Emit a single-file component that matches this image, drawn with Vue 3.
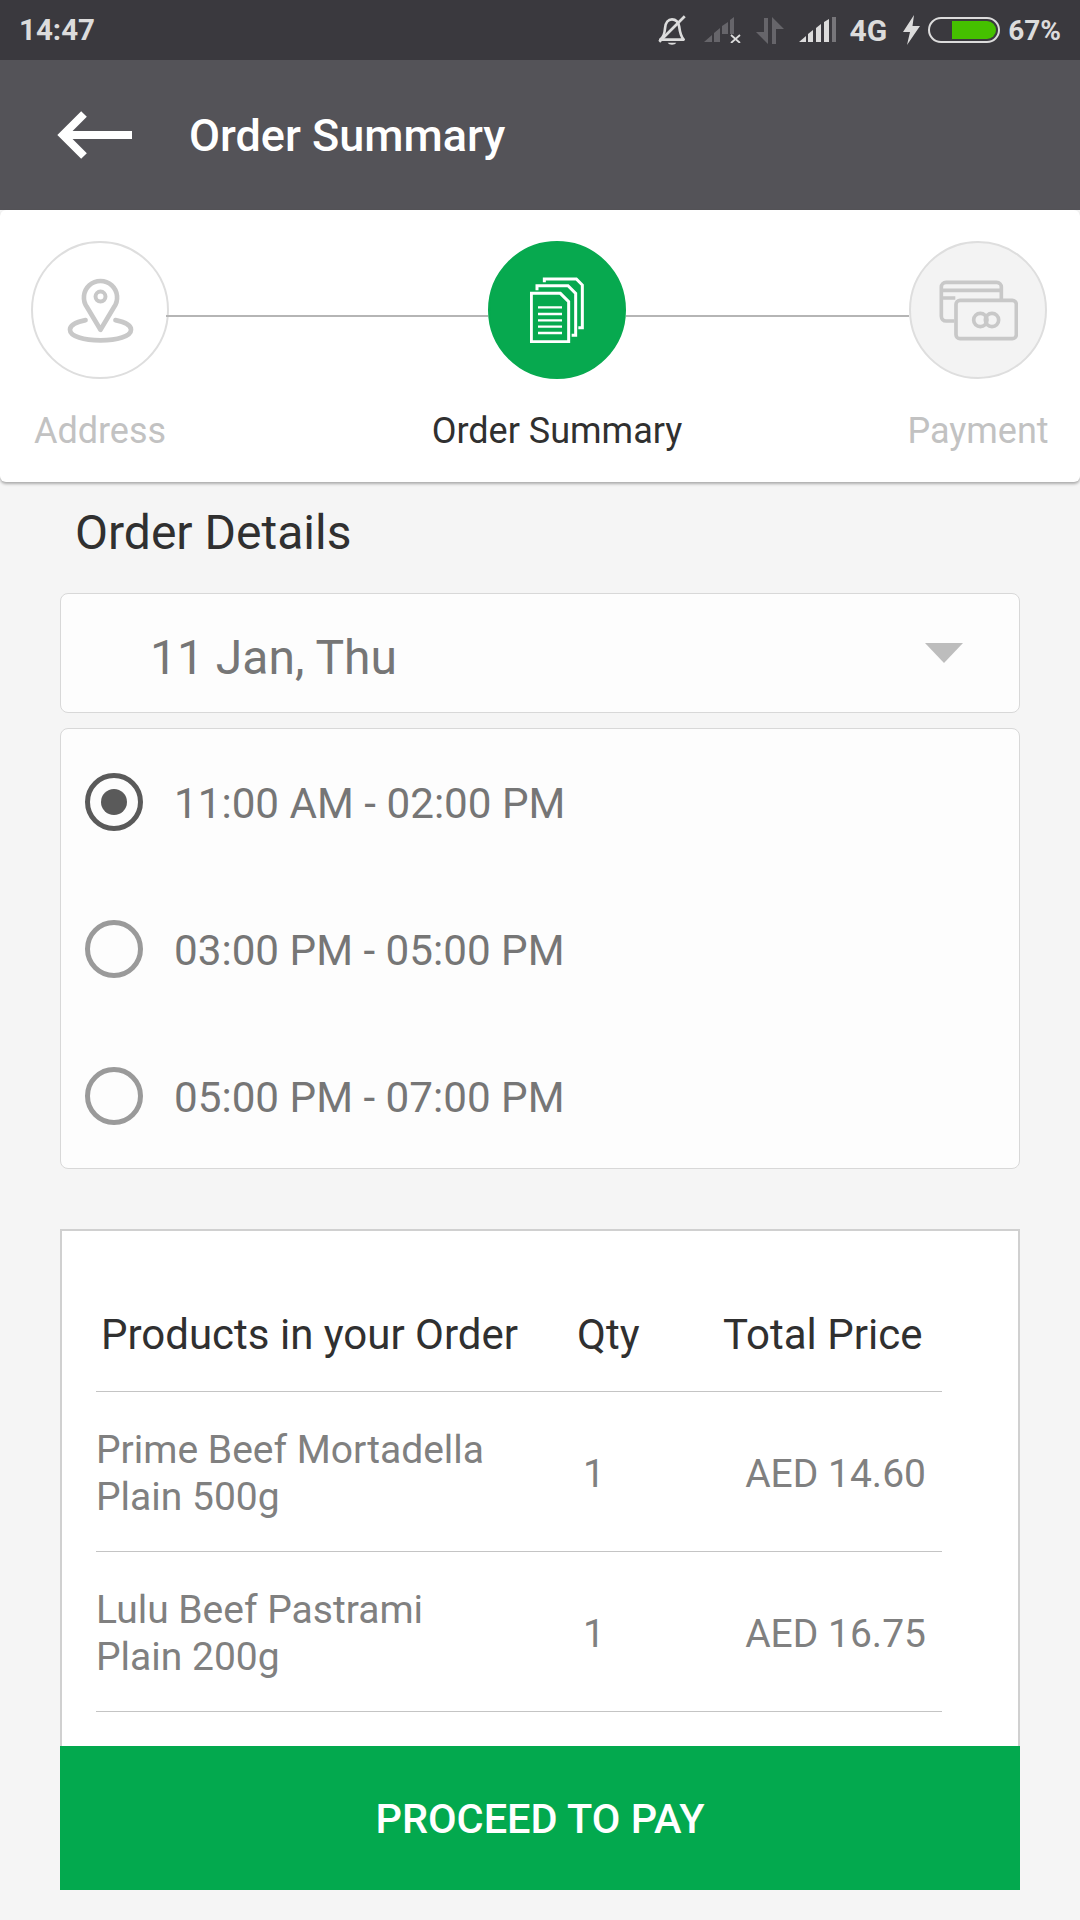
<template>
  <div class="screen">
    <div class="status-bar">
      <span class="clock">14:47</span>
      <div class="status-icons">
        <svg class="ic-bell" viewBox="0 0 32 32" width="34" height="34">
          <path d="M5 25c3-3 4-5 4.500-11 .4-5 3-8 6.500-8s6 2.500 6.800 7c.6 5 1.700 9 4.200 12z" fill="none" stroke="#dcdcdc" stroke-width="2.500" stroke-linejoin="round"/>
          <path d="M12 28c1 2.500 7 2.500 8 0z" fill="#dcdcdc"/>
          <path d="M4 27L28 3" stroke="#dcdcdc" stroke-width="2.500"/>
        </svg>
        <svg class="ic-sig1" viewBox="0 0 38 26" width="38" height="26">
          <path d="M0 25L8 18V25zM10 16L16 11V25H10zM18 9L24 5V17H18zM26 3L30 0V17H26z" fill="#66656a"/>
          <path d="M27 18L36 26M36 18L27 26" stroke="#dcdcdc" stroke-width="1.800"/>
        </svg>
        <svg class="ic-data" viewBox="0 0 28 27" width="28" height="27">
          <path d="M8 1H12V27L0 15H8zM16 0L28 12H20V27H16z" fill="#66656a"/>
        </svg>
        <svg class="ic-sig2" viewBox="0 0 38 26" width="38" height="26">
          <path d="M0 25L7 19V25zM9 17L14 13V25H9zM17 11L22 7V25H17zM25 5L30 2V25H25z" fill="#dcdcdc"/>
          <rect x="33" y="0" width="4" height="25" fill="#77767a"/>
        </svg>
        <span class="net">4G</span>
        <svg class="ic-bolt" viewBox="0 0 18 30" width="18" height="30">
          <path d="M11 0L0 17H7L4 30L17 11H9.500z" fill="#dcdcdc"/>
        </svg>
        <div class="battery"><div class="battery-fill"></div></div>
        <span class="pct">67%</span>
      </div>
    </div>

    <div class="app-bar">
      <svg class="back" viewBox="0 0 80 52" width="80" height="52">
        <path d="M77 26H8M29 5L8 26L29 47" fill="none" stroke="#fff" stroke-width="8"/>
      </svg>
      <span class="app-title">Order Summary</span>
    </div>

    <div class="stepper">
      <div class="step">
        <div class="circle">
          <svg viewBox="190 190 220 220" width="73" height="73" fill="none" stroke="#c8c8c8" stroke-width="14">
            <path d="M300 358L260 291A50 50 0 1 1 340 291Z" stroke-linejoin="round"/>
            <circle cx="300" cy="258" r="15" stroke-width="12"/>
            <path d="M255 329C225 335 208 345 208 358C208 378 250 390 300 390C350 390 392 378 392 358C392 345 375 335 345 329" stroke-linecap="round"/>
          </svg>
        </div>
        <span class="step-label">Address</span>
      </div>
      <div class="connector first"></div>
      <div class="step">
        <div class="circle active">
          <svg viewBox="270 200 162 198" width="54" height="66" fill="none" stroke="#fff" stroke-width="9">
            <path d="M313 216V206H409L427 224V352H415"/>
            <path d="M291 240V226H384L407 249V375H395"/>
            <path d="M274 249H361L386 274V394H274Z" fill="#07a94f"/>
            <path d="M294 291H366M294 311H366M294 330H366M294 349H366M294 368H366" stroke-width="7"/>
          </svg>
        </div>
        <span class="step-label current">Order Summary</span>
      </div>
      <div class="connector"></div>
      <div class="step">
        <div class="circle muted">
          <svg viewBox="173 180 240 240" width="80" height="80" fill="none" stroke="#c8c8c8" stroke-width="11">
            <path d="M222 333H197A14 14 0 0 1 183 319V231A14 14 0 0 1 197 217H349A14 14 0 0 1 363 231V268"/>
            <path d="M183 241H363M183 264H225"/>
            <rect x="227" y="271" width="181" height="115" rx="12"/>
            <circle cx="300" cy="330" r="20"/>
            <circle cx="335" cy="330" r="20"/>
          </svg>
        </div>
        <span class="step-label">Payment</span>
      </div>
    </div>

    <h2 class="section-title">Order Details</h2>

    <div class="date-box">
      <span>11 Jan, Thu</span>
      <span class="caret"></span>
    </div>

    <div class="slot-box">
      <div class="slot" v-for="(s, i) in slots" :key="s">
        <span class="radio" :class="{ on: i === selected }"></span>
        <span class="slot-text">{{ s }}</span>
      </div>
    </div>

    <div class="products">
      <div class="row head">
        <span>Products in your Order</span>
        <span class="qty-head">Qty</span>
        <span class="price-head">Total Price</span>
      </div>
      <div class="row item" v-for="p in products" :key="p.name">
        <span class="name">{{ p.name }}<br>{{ p.size }}</span>
        <span class="qty">{{ p.qty }}</span>
        <span class="price">{{ p.price }}</span>
      </div>
    </div>

    <div class="pay-btn">PROCEED TO PAY</div>
  </div>
</template>

<script setup>
import { ref } from "vue";

const selected = ref(0);

const slots = ["11:00 AM - 02:00 PM", "03:00 PM - 05:00 PM", "05:00 PM - 07:00 PM"];

const products = [
  { name: "Prime Beef Mortadella", size: "Plain 500g", qty: 1, price: "AED 14.60" },
  { name: "Lulu Beef Pastrami", size: "Plain 200g", qty: 1, price: "AED 16.75" }
];
</script>

<style>
html, body {
  margin: 0;
  background: #f5f5f5;
}
</style>

<style scoped>
.screen {
  position: relative;
  width: 1080px;
  height: 1920px;
  overflow: hidden;
  background: #f5f5f5;
  font-family: Roboto, "Liberation Sans", sans-serif;
}

.status-bar {
  height: 60px;
  background: #3a393e;
  display: flex;
  align-items: center;
  justify-content: space-between;
  padding: 0 19px;
  box-sizing: border-box;
  color: #dcdcdc;
  font-size: 28px;
  font-weight: 700;
}

.clock { font-size: 29.500px; }

.status-icons {
  display: flex;
  align-items: center;
}

.ic-sig1 { margin-left: 15px; }
.ic-data { margin-left: 14px; }
.ic-sig2 { margin-left: 15px; }
.net { margin-left: 13px; font-size: 30px; }
.ic-bolt { margin-left: 16px; }

.battery {
  width: 72px;
  height: 26px;
  margin-left: 7px;
  box-sizing: border-box;
  border: 2px solid #dcdcdc;
  border-radius: 13px;
  padding: 2px;
  display: flex;
  justify-content: flex-end;
}

.battery-fill {
  width: 44px;
  background: #45c000;
  border-radius: 0 9px 9px 0;
}

.pct { margin-left: 8px; }

.app-bar {
  height: 150px;
  background: #545358;
  display: flex;
  align-items: center;
  padding-left: 55px;
}

.back { margin-right: 54px; }

.app-title {
  color: #fff;
  font-size: 45px;
  font-weight: 500;
}

.stepper {
  height: 272px;
  box-sizing: border-box;
  padding: 31px 33px 0 31px;
  display: flex;
  background: #fff;
  border-radius: 6px;
  box-shadow: 0 2px 3px rgba(0, 0, 0, 0.3);
}

.step {
  width: 138px;
  display: flex;
  flex-direction: column;
  align-items: center;
}

.circle {
  width: 138px;
  height: 138px;
  flex-shrink: 0;
  box-sizing: border-box;
  border: 2px solid #dedede;
  border-radius: 50%;
  background: #fff;
  display: flex;
  align-items: center;
  justify-content: center;
}

.circle.active {
  background: #07a94f;
  border-color: #07a94f;
}

.circle.muted {
  background: #f3f3f3;
}

.connector {
  flex: 1;
  height: 2px;
  margin-top: 74px;
  background: #b5b5b5;
}

.connector.first {
  flex: 0 0 322px;
  margin-left: -3px;
}

.step-label {
  margin-top: 32px;
  font-size: 36px;
  line-height: 40px;
  white-space: nowrap;
  color: #c2c2c2;
}

.step-label.current {
  color: #303030;
}

.section-title {
  margin: 25px 0 0 75px;
  font-size: 48px;
  line-height: 52px;
  font-weight: 400;
  color: #303030;
}

.date-box {
  margin: 34px 60px 0;
  height: 120px;
  box-sizing: border-box;
  padding: 8px 56px 0 89px;
  display: flex;
  align-items: center;
  justify-content: space-between;
  background: #fdfdfd;
  border: 1.5px solid #d8d8d8;
  border-radius: 8px;
  font-size: 48px;
  color: #767676;
}

.caret {
  width: 0;
  height: 0;
  margin-top: -8px;
  border-left: 19px solid transparent;
  border-right: 19px solid transparent;
  border-top: 20px solid #bdbdbd;
}

.slot-box {
  margin: 15px 60px 0;
  height: 441px;
  box-sizing: border-box;
  padding: 0 0 0 24px;
  background: #fdfdfd;
  border: 1.5px solid #d8d8d8;
  border-radius: 8px;
  font-size: 42.200px;
  color: #767676;
}

.slot {
  height: 147px;
  display: flex;
  align-items: center;
  gap: 31px;
}

.slot-text { padding-top: 2px; }

.radio {
  width: 58px;
  height: 58px;
  margin-top: -2px;
  box-sizing: border-box;
  border: 5px solid #9a9a9a;
  border-radius: 50%;
  display: flex;
  align-items: center;
  justify-content: center;
}

.radio.on {
  border-color: #5a5a5a;
}

.radio.on::after {
  content: "";
  width: 26px;
  height: 26px;
  border-radius: 50%;
  background: #5a5a5a;
}

.products {
  margin: 60px 60px 0;
  height: 640px;
  box-sizing: border-box;
  padding: 0 76px 0 34px;
  background: #fff;
  border: 2px solid #d0d0d0;
}

.row {
  display: grid;
  grid-template-columns: 481px 145px 1fr;
  align-items: center;
  border-bottom: 1.5px solid #c4c4c4;
}

.head {
  height: 161px;
  font-size: 42px;
  color: #303030;
  box-sizing: border-box;
  padding-top: 46px;
}

.head span:first-child {
  padding-left: 5px;
}

.item {
  height: 160px;
  box-sizing: border-box;
  padding-top: 5px;
  font-size: 39px;
  line-height: 47px;
  color: #808080;
}

.qty { padding-left: 6px; }

.price {
  text-align: right;
  padding-right: 16px;
}

.price-head {
  white-space: nowrap;
  padding-left: 1px;
}

.pay-btn {
  position: absolute;
  left: 60px;
  top: 1746px;
  width: 960px;
  height: 144px;
  background: #03a94e;
  color: #fff;
  font-size: 41.500px;
  font-weight: 500;
  display: flex;
  align-items: center;
  justify-content: center;
}
</style>
